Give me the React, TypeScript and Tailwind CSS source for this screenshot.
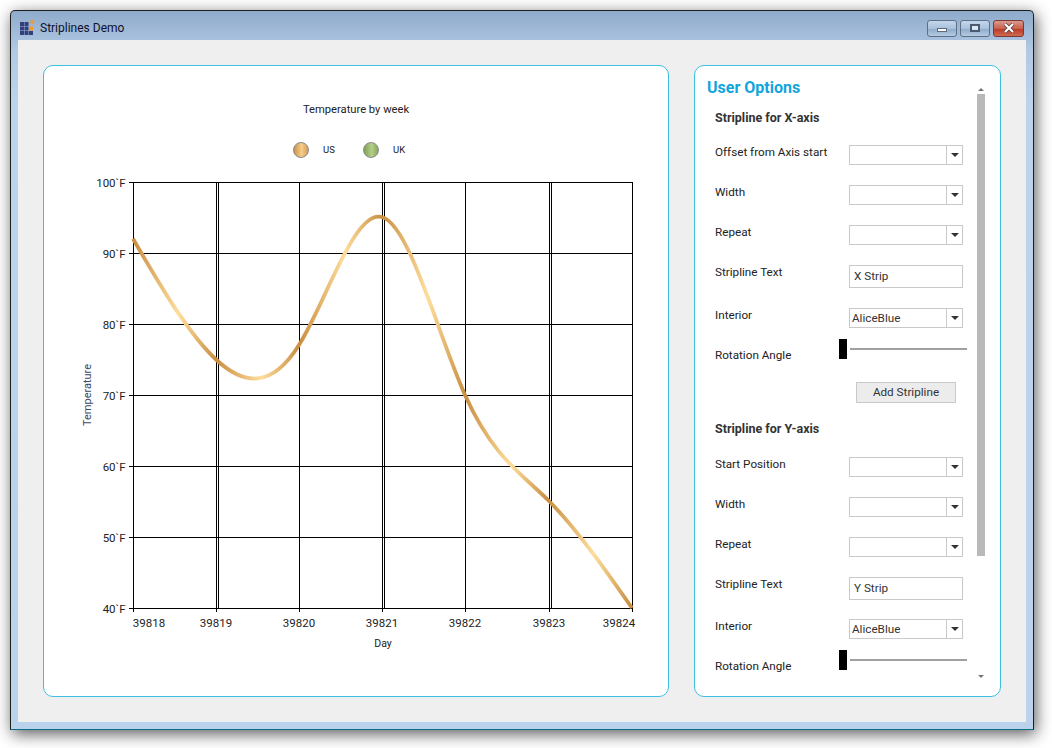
const font = { fontFamily: '"Roboto", "Liberation Sans", sans-serif' };

// day index -> y pixel for the spline
const ys = [238.8, 359.5, 345, 217, 395, 501, 608];
const xs = [133, 216, 299, 382, 465, 549, 632];
const yTicks = ['100', '90', '80', '70', '60', '50', '40'];
const gridY = [182, 253, 324, 395, 466, 537, 608];
const days = ['39818', '39819', '39820', '39821', '39822', '39823', '39824'];

function splinePath() {
  const n = ys.length;
  const a: number[] = [];
  const b: number[] = [];
  for (let i = 0; i < n; i++) {
    const prev = ys[Math.max(i - 1, 0)];
    const next = ys[Math.min(i + 1, n - 1)];
    a.push(i === 0 || i === n - 1 ? 2 : 4);
    b.push(3 * (next - prev));
  }
  for (let i = 1; i < n; i++) {
    const m = 1 / a[i - 1];
    a[i] -= m;
    b[i] -= m * b[i - 1];
  }
  const d: number[] = new Array(n).fill(0);
  d[n - 1] = b[n - 1] / a[n - 1];
  for (let i = n - 2; i >= 0; i--) d[i] = (b[i] - d[i + 1]) / a[i];
  let path = `M${xs[0]} ${ys[0]}`;
  for (let i = 0; i < n - 1; i++) {
    const h = (xs[i + 1] - xs[i]) / 3;
    path += ` C${xs[i] + h} ${ys[i] + d[i] / 3} ${xs[i + 1] - h} ${ys[i + 1] - d[i + 1] / 3} ${xs[i + 1]} ${ys[i + 1]}`;
  }
  return path;
}

function Chart() {
  return (
    <svg width="625" height="490" viewBox="43 170 625 490" className="block">
      <defs>
        <linearGradient id="curve" gradientUnits="userSpaceOnUse" x1="133" y1="0" x2="216" y2="0" spreadMethod="repeat">
          <stop offset="0" stopColor="#c98f42" />
          <stop offset="0.55" stopColor="#fedd9c" />
          <stop offset="1" stopColor="#c98f42" />
        </linearGradient>
      </defs>
      {gridY.map((y, i) => (
        <g key={y}>
          <line x1="129" x2="632" y1={y + 0.5} y2={y + 0.5} stroke="#000" />
          <text x="125.5" y={y + 5} textAnchor="end" fontSize="11.5" fill="#222">
            {yTicks[i]}`F
          </text>
        </g>
      ))}
      {xs.map((x, i) => (
        <g key={x}>
          <line x1={x + 0.5} x2={x + 0.5} y1="182" y2="612" stroke="#000" />
          {i % 2 === 1 && <line x1={x + 2.5} x2={x + 2.5} y1="182" y2="608" stroke="#000" />}
          <text x={x + (i === 0 ? 16 : i === 6 ? -13 : 0)} y="627" textAnchor="middle" fontSize="11.5" fill="#222">
            {days[i]}
          </text>
        </g>
      ))}
      <path d={splinePath()} fill="none" stroke="url(#curve)" strokeWidth="3.8" />
      <text x="383" y="647" textAnchor="middle" fontSize="10.5" fill="#222">
        Day
      </text>
      <text
        x="0"
        y="0"
        transform="translate(91 395) rotate(-90)"
        textAnchor="middle"
        fontSize="11"
        fill="#3d4a68"
      >
        Temperature
      </text>
    </svg>
  );
}

function Legend({ label, className }: { label: string; className: string }) {
  return (
    <div className="flex items-center gap-[14px] w-[70px]">
      <div className={`w-[16px] h-[16px] rounded-full border border-[#8a8a8a] ${className}`} />
      <span className="text-[9.5px] text-[#222] leading-none">{label}</span>
    </div>
  );
}

function Combo({ value }: { value?: string }) {
  return (
    <div className="flex w-[114px] h-[20px] border border-[#c9c9c9] bg-white">
      <div className="flex-1 pl-[2px] text-[11.7px] leading-[18px] text-[#333]">{value}</div>
      <div className="w-[16px] border-l border-[#c9c9c9] flex items-center justify-center">
        <div className="w-0 h-0 border-x-[4px] border-x-transparent border-t-[4px] border-t-[#333]" />
      </div>
    </div>
  );
}

function TextBox({ value }: { value: string }) {
  return (
    <div className="w-[114px] h-[23px] border border-[#c9c9c9] bg-white pl-[4px] text-[11.7px] leading-[21px] text-[#333]">
      {value}
    </div>
  );
}

function Label({ children }: { children: string }) {
  return <div className="w-[134px] -mt-[1px] text-[11.7px] leading-[16px] text-[#222]">{children}</div>;
}

function Slider() {
  return (
    <div className="flex items-center -ml-[10px] w-[128px] h-[20px]">
      <div className="w-[8px] h-[20px] bg-black" />
      <div className="ml-[3px] flex-1 h-[2px] bg-[#a0a0a0]" />
    </div>
  );
}

function StripSection({ title, first, text, second }: { title: string; first: string; text: string; second?: boolean }) {
  return (
    <div>
      <div className={`${second ? 'h-[36px]' : 'h-[35px]'} text-[12.5px] leading-[16px] font-bold text-[#333]`}>{title}</div>
      <div className="flex h-[40px]">
        <Label>{first}</Label>
        <Combo />
      </div>
      <div className="flex h-[40px]">
        <Label>Width</Label>
        <Combo />
      </div>
      <div className="flex h-[40px]">
        <Label>Repeat</Label>
        <Combo />
      </div>
      <div className={`flex ${second ? 'h-[42px]' : 'h-[43px]'}`}>
        <Label>Stripline Text</Label>
        <TextBox value={text} />
      </div>
      <div className="flex h-[31px]">
        <Label>Interior</Label>
        <Combo value="AliceBlue" />
      </div>
      <div className="flex h-[43px]">
        <div className="w-[134px] pt-[8px] text-[11.7px] leading-[16px] text-[#222]">Rotation Angle</div>
        <Slider />
      </div>
      {!second && (
        <div className="h-[39px] pl-[141px]">
          <div className="w-[100px] h-[21px] border border-[#c9c9c9] bg-[#ececec] text-center text-[11.7px] leading-[19px] text-[#333]">
            Add Stripline
          </div>
        </div>
      )}
    </div>
  );
}

function WinButton({ className, children }: { className: string; children: React.ReactNode }) {
  return (
    <div className={`h-[17px] rounded-[3px] border border-[#5d6f87] flex items-center justify-center ${className}`}>
      {children}
    </div>
  );
}

export default function App() {
  return (
    <div className="w-[1052px] h-[748px] overflow-hidden bg-white pt-[10px] pl-[10px]" style={font}>
      <div className="w-[1024px] h-[720px] flex flex-col border border-[#1d1d1d] border-b-[#0b6f86] rounded-t-[5px] px-[7px] pb-[7px] shadow-[2px_4px_16px_rgba(0,0,0,0.65)] bg-[linear-gradient(180deg,#8fabcb_0px,#b1c9e4_40px,#bcd3ec_90px,#bad2ec_100%)]">
        {/* title bar */}
        <div className="h-[29px] flex items-center shrink-0 ml-[1px] pr-[2px] pt-[4px]">
          <svg width="16" height="16" viewBox="0 0 16 16" className="-mt-[1px]">
            <g fill="#333f7b">
              <rect x="1" y="3" width="4" height="4" />
              <rect x="5.5" y="3" width="4" height="4" />
              <rect x="1" y="7.5" width="4" height="4" />
              <rect x="5.5" y="7.5" width="4" height="4" />
              <rect x="1" y="12" width="4" height="4" />
              <rect x="5.5" y="12" width="4" height="4" />
              <rect x="10" y="12" width="4" height="4" />
            </g>
            <rect x="10" y="7.5" width="4" height="4" fill="#ee9a2e" />
            <path d="M13 0l1 2 2 1-2 1-1 2-1-2-2-1 2-1z" fill="#ee9a2e" />
          </svg>
          <span className="ml-[5px] text-[12px] text-[#10102a]">Striplines Demo</span>
          <div className="ml-auto flex gap-[3px] mt-[1px]">
            <WinButton className="w-[30px] bg-[linear-gradient(180deg,#c4d6ea_0%,#a9c2dd_50%,#8ea9c8_52%,#b5cbe3_100%)]">
              <div className="w-[10px] h-[4px] mt-[4px] bg-white border border-[#5a6a80]" />
            </WinButton>
            <WinButton className="w-[30px] bg-[linear-gradient(180deg,#c4d6ea_0%,#a9c2dd_50%,#8ea9c8_52%,#b5cbe3_100%)]">
              <div className="w-[10px] h-[8px] bg-white/60 border-2 border-[#4a5a70]" />
            </WinButton>
            <WinButton className="w-[31px] border-[#7a3a33] bg-[linear-gradient(180deg,#dc9a8e_0%,#c9604e_50%,#b93a26_52%,#cf6a50_100%)]">
              <svg width="12" height="10" viewBox="0 0 12 10">
                <path d="M2 1l8 8M10 1l-8 8" stroke="#4a3a3a" strokeWidth="3.6" />
                <path d="M2 1l8 8M10 1l-8 8" stroke="#fff" strokeWidth="2.2" />
              </svg>
            </WinButton>
          </div>
        </div>

        {/* client area */}
        <div className="flex-1 flex gap-[25px] bg-[#efefef] pl-[25px] pr-[25px] pt-[25px] pb-[25px] min-h-0">
          {/* chart card */}
          <div className="w-[626px] rounded-[10px] border border-[#3dbfe0] bg-white flex flex-col items-center">
            <div className="mt-[37px] h-[14px] text-[11.2px] leading-[14px] text-[#222]">Temperature by week</div>
            <div className="mt-[25px] flex h-[16px] pl-[14px]">
              <Legend label="US" className="bg-[linear-gradient(90deg,#c9924a,#f8cc8a_55%,#d29c55)]" />
              <Legend label="UK" className="bg-[linear-gradient(90deg,#7f9e52,#b4d088_55%,#88a65c)]" />
            </div>
            <div className="mt-[12px] self-start -ml-[1px]">
              <Chart />
            </div>
          </div>

          {/* options card */}
          <div className="w-[307px] rounded-[10px] border border-[#3dbfe0] bg-white flex overflow-hidden">
            <div className="w-[282px] shrink-0">
              <div className="pl-[12px] pt-[12px] h-[44px] text-[16px] leading-[20px] font-bold text-[#10a5dc]">
                User Options
              </div>
              <div className="pl-[20px]">
                <StripSection title="Stripline for X-axis" first="Offset from Axis start" text="X Strip" />
                <StripSection title="Stripline for Y-axis" first="Start Position" text="Y Strip" second />
              </div>
            </div>
            {/* scrollbar */}
            <div className="w-[8px] ml-0 flex flex-col items-center">
              <div className="mt-[18px] h-[10px] flex items-center">
                <div className="w-0 h-0 border-x-[3px] border-x-transparent border-b-[3px] border-b-[#777]" />
              </div>
              <div className="w-[8px] h-[462px] bg-[#b9b9b9] mt-0" />
              <div className="mt-[119px] w-0 h-0 border-x-[3px] border-x-transparent border-t-[3px] border-t-[#777]" />
            </div>
          </div>
        </div>
      </div>
    </div>
  );
}
